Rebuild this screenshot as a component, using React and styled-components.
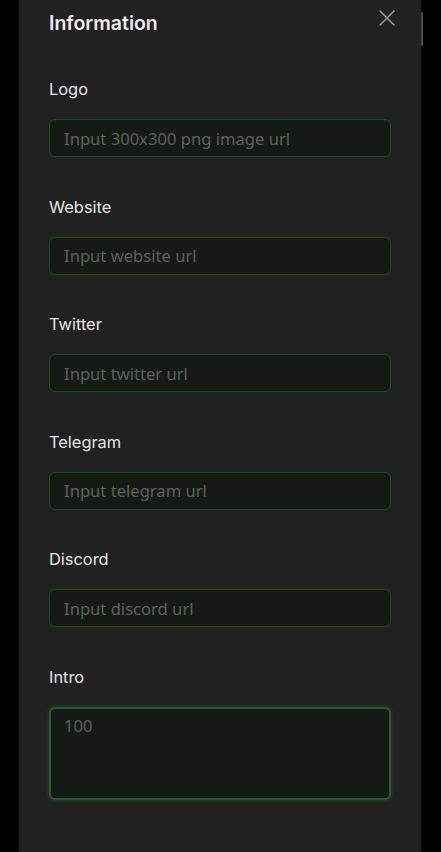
import React from "react";
import styled, { createGlobalStyle } from "styled-components";

const Global = createGlobalStyle`
  html, body { margin: 0; padding: 0; background: #000; }
  body { font-family: Inter, "Noto Sans", sans-serif; }
  * { box-sizing: border-box; }
`;

const Screen = styled.div`
  position: relative;
  width: 441px;
  min-height: 852px;
  background: #000;
  overflow: hidden;
`;

const BackdropEdge = styled.div`
  position: absolute;
  left: 421px;
  top: 12px;
  width: 2px;
  height: 34px;
  border-radius: 1px;
  background: #4a4a4a;
`;

const Panel = styled.div`
  margin-left: 19px;
  width: 402px;
  min-height: 852px;
  background: #212121;
  padding: 10px 30px 0 30px;
  display: flex;
  flex-direction: column;
`;

const Header = styled.div`
  display: flex;
  align-items: center;
  justify-content: space-between;
  height: 26px;
`;

const Title = styled.h2`
  margin: 0;
  font-family: Inter, "Open Sans", sans-serif;
  font-weight: 600;
  font-size: 19.5px;
  line-height: 26px;
  color: #ececec;
`;

const Close = styled.button`
  background: none;
  border: none;
  padding: 0;
  margin-right: -4px;
  margin-top: -10px;
  width: 16px;
  height: 16px;
  display: flex;
  cursor: pointer;
`;

const Form = styled.div`
  display: flex;
  flex-direction: column;
  gap: 37.6px;
  margin-top: 41px;
`;

const Field = styled.div`
  display: flex;
  flex-direction: column;
  gap: 18px;
`;

const Label = styled.label`
  font-family: Inter, "Noto Sans", sans-serif;
  font-size: 16.4px;
  line-height: 24px;
  color: #e6e6e6;
`;

const Input = styled.input`
  width: 342px;
  height: 38px;
  border-radius: 6px;
  border: 1px solid #26412a;
  background: #151a16;
  padding: 0 14px;
  font-family: "Noto Sans", sans-serif;
  font-size: 16.6px;
  color: #ddd;
  outline: none;
  &::placeholder { color: #5c615d; }
`;

const TextArea = styled.textarea`
  width: 342px;
  height: 93px;
  border-radius: 6px;
  border: 2px solid #2b5a30;
  box-shadow: 0 0 4px rgba(60, 150, 70, 0.35);
  background: #151a16;
  padding: 6px 13px;
  font-family: "Noto Sans", sans-serif;
  font-size: 16.6px;
  line-height: 22px;
  color: #ddd;
  resize: none;
  outline: none;
  &::placeholder { color: #5c615d; }
`;

const fields = [
  ["Logo", "Input 300x300 png image url"],
  ["Website", "Input website url"],
  ["Twitter", "Input twitter url"],
  ["Telegram", "Input telegram url"],
  ["Discord", "Input discord url"],
];

export default function App() {
  return (
    <>
      <Global />
      <Screen>
        <BackdropEdge />
        <Panel>
          <Header>
            <Title>Information</Title>
            <Close aria-label="close">
              <svg width="16" height="16" viewBox="0 0 16 16">
                <path d="M1 1 L15 15 M15 1 L1 15" stroke="#9a9a9a" strokeWidth="1.5" strokeLinecap="round" />
              </svg>
            </Close>
          </Header>
          <Form>
            {fields.map(([label, ph]) => (
              <Field key={label}>
                <Label>{label}</Label>
                <Input placeholder={ph} />
              </Field>
            ))}
            <Field>
              <Label>Intro</Label>
              <TextArea placeholder="100" />
            </Field>
          </Form>
        </Panel>
      </Screen>
    </>
  );
}
